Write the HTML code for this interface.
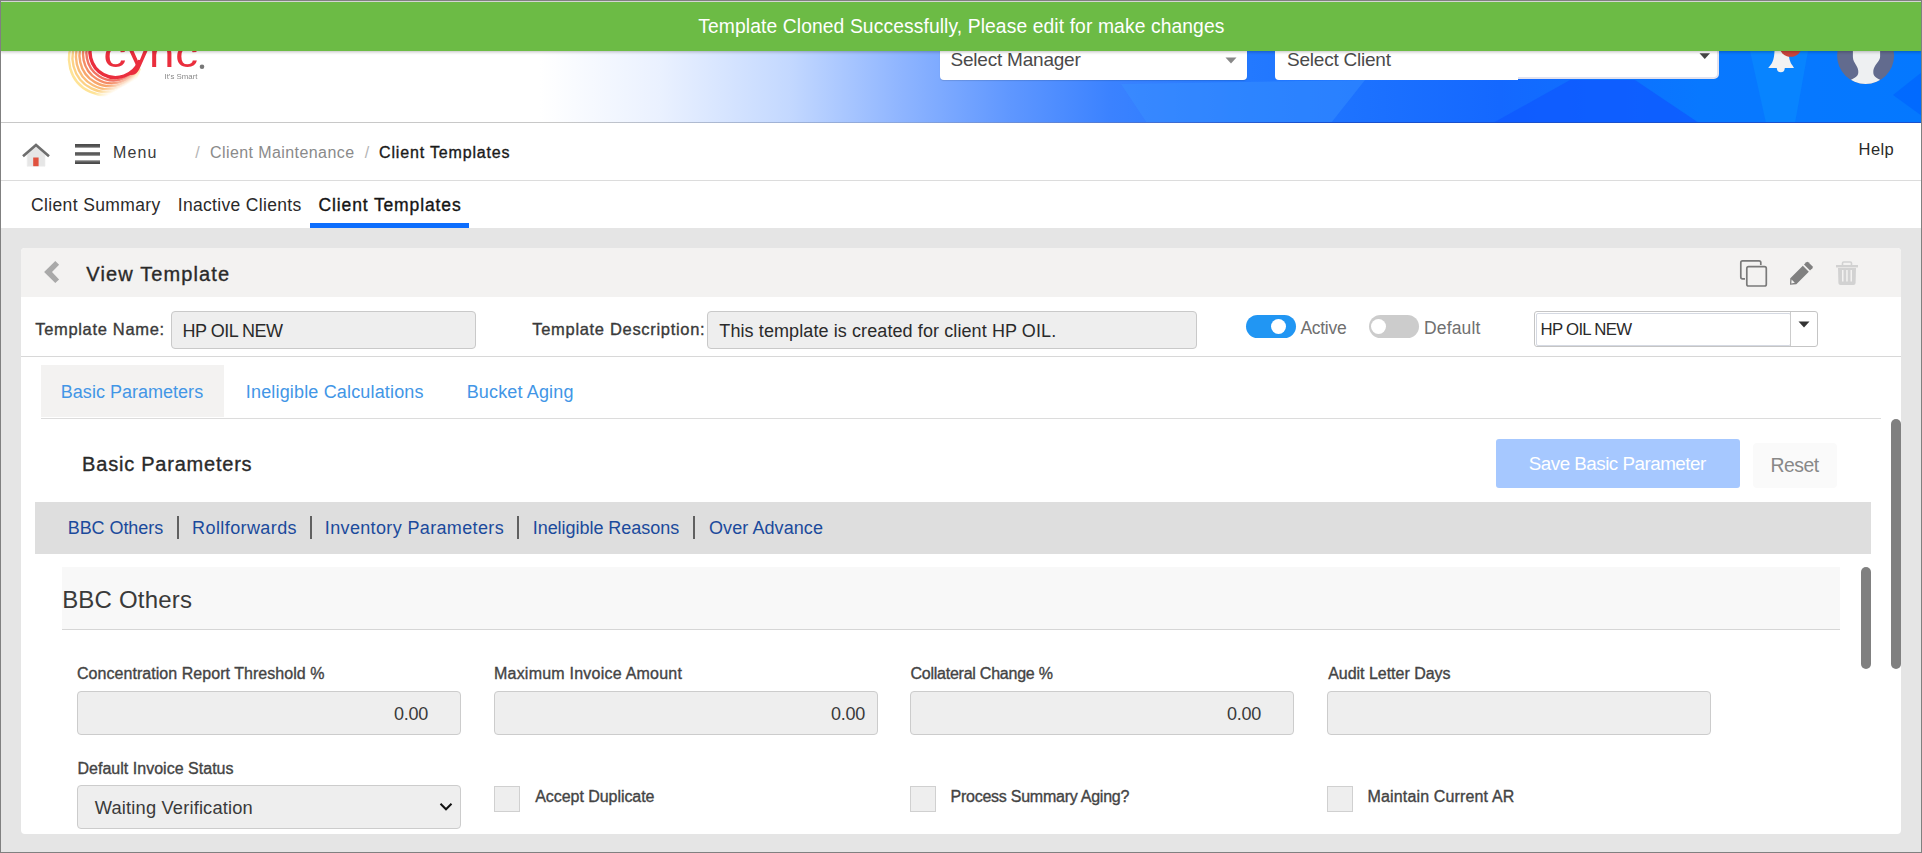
<!DOCTYPE html>
<html lang="en">
<head>
<meta charset="utf-8">
<title>Client Templates - View Template</title>
<style>
html,body{margin:0;padding:0;}
body{width:1922px;height:853px;overflow:hidden;background:#e5e5e5;font-family:"Liberation Sans",sans-serif;}
#root{position:relative;width:1922px;height:853px;overflow:hidden;background:#e5e5e5;}
#root div,#root svg,#root span{position:absolute;box-sizing:border-box;}
header,nav,main,section{display:block;position:static;margin:0;padding:0;}
.t{white-space:nowrap;line-height:1;font-family:"Liberation Sans",sans-serif;}
.inp{background:#eeeeee;border:1px solid #cccccc;border-radius:4px;}
.chk{background:#eeeeee;border:1px solid #d0d0d0;width:25.500px;height:26px;}
.sep{width:2px;height:23.500px;top:515.500px;background:#606060;}

</style>
</head>
<body>
<div id="root">
<header>
<!-- header -->
<div id="hdr" style="left:0;top:0;width:1922px;height:123px;background:linear-gradient(90deg,#ffffff 0,#ffffff 540px,#eaf1ff 660px,#c3d8ff 790px,#8fb5ff 900px,#5f97ff 1010px,#3b82ff 1110px,#2379ff 1250px,#1468ff 1500px,#0878ff 1700px,#0478ff 1922px);"></div>
<svg id="hdrpoly" style="left:0;top:0" width="1922" height="123" viewBox="0 0 1922 123">
  <polygon points="1121,84 1365,80 1331,123 1147,123" fill="#3a92ff" opacity="0.450"/>
  <polygon points="1570,80 1635,80 1699,123 1493,123" fill="#0f58ff" opacity="0.750"/>
  <polygon points="1750,51 1808,51 1795,123 1766,123" fill="#0a8cff" opacity="0.600"/>
  <polygon points="1922,72 1893,95 1922,116" fill="#0060ff" opacity="0.600"/>
</svg>
<div id="hdrline" style="left:0;top:122px;width:1922px;height:1px;background:linear-gradient(90deg,#c8c8c8 0,#c8c8c8 560px,#8aa6dd 900px,#1a50cc 1300px,#1a50cc 1922px);"></div>

<!-- logo -->
<svg id="logo" style="left:0;top:0" width="260" height="122" viewBox="0 0 260 122">
  <defs>
    <linearGradient id="lgfade" gradientUnits="userSpaceOnUse" x1="64" y1="110.800" x2="68.500" y2="118.600">
      <stop offset="0" stop-color="#ffffff" stop-opacity="1"/>
      <stop offset="1" stop-color="#ffffff" stop-opacity="0"/>
    </linearGradient>
    <mask id="lgmask" maskUnits="userSpaceOnUse" x="0" y="0" width="260" height="122">
      <rect x="0" y="0" width="260" height="122" fill="#000000"/>
      <rect x="0" y="0" width="260" height="122" fill="url(#lgfade)"/>
    </mask>
    <filter id="lgblur" x="-10%" y="-10%" width="120%" height="120%"><feGaussianBlur stdDeviation="0.550"/></filter>
  </defs>
  <g filter="url(#lgblur)">
  <g fill="none" mask="url(#lgmask)" opacity="0.820">
    <path d="M136.94 67.47 A27.25 27.25 0 1 1 91.43 37.54" stroke="#ee5540" stroke-width="2.400"/>
    <path d="M137.53 68.10 A29.00 29.00 0 1 1 88.24 37.70" stroke="#f27545" stroke-width="2.400"/>
    <path d="M138.12 68.50 A30.75 30.75 0 1 1 85.06 37.86" stroke="#f6934e" stroke-width="2.400"/>
    <path d="M138.70 68.67 A32.50 32.50 0 1 1 81.88 38.03" stroke="#f9ae5c" stroke-width="2.400"/>
    <path d="M139.26 68.61 A34.25 34.25 0 1 1 78.69 38.19" stroke="#fcc86c" stroke-width="2.400"/>
    <path d="M139.77 68.32 A36.00 36.00 0 1 1 75.51 38.35" stroke="#fedd80" stroke-width="2.400"/>
  </g>
  <path d="M139.14 61.55 A25.50 25.50 0 1 1 94.61 37.37" fill="none" stroke="#ea2e3e" stroke-width="3.400" stroke-linecap="round"/>
  <text transform="scale(1.20 1)" x="86.17 105.83 124.17 146.08" y="67.300" font-family="Liberation Sans, sans-serif" font-size="38" fill="#ea2e3e">cync</text>
  <circle cx="202" cy="66.700" r="2.300" fill="#777777"/>
  <text x="164.500" y="79" font-family="Liberation Sans, sans-serif" font-size="7.200" fill="#8a8a8a" textLength="33" lengthAdjust="spacingAndGlyphs">It's Smart</text>
  </g>
</svg>

<!-- header selects -->
<div id="selmgr" style="left:940px;top:30px;width:307px;height:50px;background:#ffffff;border-radius:4px;box-shadow:0 1px 1px rgba(0,0,0,.120);"></div>
<svg style="left:1225px;top:57px" width="12" height="7" viewBox="0 0 12 7"><polygon points="0.5,0.5 11.5,0.5 6,6.5" fill="#888888"/></svg>
<span id="t_selmgr" class="t" style="left:950.46px;top:50.01px;font-size:19px;color:#4a4a4a;letter-spacing:-0.210px;">Select Manager</span>
<div id="selcli" style="left:1275px;top:30px;width:444px;height:49px;background:#ffffff;border-radius:5px;border:2px solid #e2e2ee;"></div>
<div style="left:1275px;top:30px;width:243px;height:50px;background:#ffffff;border-radius:4px 0 0 4px;"></div>
<svg style="left:1699px;top:53px" width="12" height="7" viewBox="0 0 12 7"><polygon points="0.500,0.200 11,0.200 5.750,5.900" fill="#444444"/></svg>
<span id="t_selcli" class="t" style="left:1287.08px;top:50.01px;font-size:19px;color:#4a4a4a;letter-spacing:-0.236px;">Select Client</span>

<!-- bell -->
<svg id="bell" style="left:1760px;top:30px" width="50" height="50" viewBox="1760 30 50 50">
  <path d="M1768.200 68 L1770.200 65.600 C1773 62.300 1774.200 58 1774.500 51 L1774.500 36 L1788.500 36 L1788.500 51 C1788.800 58 1790 62.300 1792.500 65.600 L1794 68 Z" fill="#f2f2f2"/>
  <circle cx="1780.800" cy="68.300" r="3.900" fill="#f2f2f2"/>
  <circle cx="1790.600" cy="45.300" r="11.500" fill="#c9443c"/>
</svg>
<!-- avatar -->
<svg id="avatar" style="left:1836px;top:26px" width="60" height="60" viewBox="1836 26 60 60">
  <defs><clipPath id="avc"><circle cx="1865.600" cy="55.500" r="28.500"/></clipPath></defs>
  <circle cx="1865.600" cy="55.500" r="28.500" fill="#626b8e"/>
  <g clip-path="url(#avc)">
    <path d="M1852.900 40 L1852.900 57 C1852.900 60 1854.500 62.500 1856 65 C1857.800 68 1858.300 69.500 1858.300 72 C1858.300 75.500 1856.500 77 1852.500 79 L1846 82.500 L1846 90 L1885 90 L1885 82.500 L1878.500 79 C1874.800 77 1873.300 75.500 1873.300 72 C1873.300 69.500 1873.800 68 1875.600 65 C1877.500 62 1880.100 60 1880.100 57 L1880.100 40 Z" fill="#eef0f2"/>
  </g>
</svg>

</header>

<!-- green banner (on top of header) -->
<div id="banner" style="left:0;top:0;width:1922px;height:51px;background:#6cbb45;box-shadow:0 1px 3px rgba(0,0,0,.25);"></div>
<span id="t_banner" class="t" style="left:698.26px;top:17.02px;font-size:19.3px;color:#ffffff;letter-spacing:0.099px;">Template Cloned Successfully, Please edit for make changes</span>

<nav>
<!-- nav bar -->
<div id="nav" style="left:0;top:123px;width:1922px;height:57px;background:#ffffff;"></div>
<div style="left:0;top:180px;width:1922px;height:1px;background:#dcdcdc;"></div>
<div id="tabs" style="left:0;top:181px;width:1922px;height:47px;background:#ffffff;"></div>
<div id="tabul" style="left:310px;top:223px;width:159px;height:5px;background:#0d6efd;"></div>

<!-- home icon -->
<svg id="home" style="left:20px;top:141px" width="32" height="28" viewBox="0 0 32 28">
  <path d="M7.200 13.500 L7.200 25.200 L25 25.200 L25 13.500 L16 5.500 Z" fill="#e6e6e6" stroke="#ececec" stroke-width="0.700"/>
  <rect x="13.200" y="16.500" width="5.400" height="8.700" fill="#e0523f"/>
  <path d="M3 15.300 L16 4 L29 15.300" fill="none" stroke="#6e6e6e" stroke-width="2.600" stroke-linejoin="miter"/>
</svg>
<!-- hamburger -->
<div style="left:75px;top:144px;width:25px;height:4px;background:linear-gradient(180deg,#4a4a4a 0,#555555 60%,#bdbdbd 100%);"></div>
<div style="left:75px;top:152px;width:25px;height:4px;background:linear-gradient(180deg,#8a8a8a 0,#555555 40%,#666666 75%,#c4c4c4 100%);"></div>
<div style="left:75px;top:160px;width:25px;height:4px;background:linear-gradient(180deg,#bdbdbd 0,#5a5a5a 45%,#444444 100%);"></div>

<span id="t_menu" class="t" style="left:113.00px;top:145.01px;font-size:16px;color:#3a3a3a;letter-spacing:1.131px;">Menu</span>
<span id="t_s1" class="t" style="left:195.34px;top:145.01px;font-size:16px;color:#b4b4b4;letter-spacing:0.000px;">/</span>
<span id="t_cm" class="t" style="left:209.96px;top:145.01px;font-size:16px;color:#8a8a8a;letter-spacing:0.420px;">Client Maintenance</span>
<span id="t_s2" class="t" style="left:364.80px;top:145.01px;font-size:16px;color:#b4b4b4;letter-spacing:0.000px;">/</span>
<span id="t_ct" class="t" style="left:379.00px;top:145.01px;font-size:16px;color:#1a1a1a;letter-spacing:0.841px;-webkit-text-stroke:0.35px #1a1a1a;">Client Templates</span>
<span id="t_help" class="t" style="left:1858.62px;top:141.01px;font-size:16.5px;color:#2a2a2a;letter-spacing:0.404px;">Help</span>
<span id="t_tab1" class="t" style="left:31.00px;top:197.02px;font-size:17.5px;color:#2a2a2a;letter-spacing:0.366px;">Client Summary</span>
<span id="t_tab2" class="t" style="left:177.74px;top:197.02px;font-size:17.5px;color:#2a2a2a;letter-spacing:0.320px;">Inactive Clients</span>
<span id="t_tab3" class="t" style="left:318.50px;top:197.02px;font-size:17.5px;color:#151515;letter-spacing:0.872px;-webkit-text-stroke:0.35px #151515;">Client Templates</span>
</nav>

<main>
<!-- card -->
<div id="card" style="left:21px;top:248px;width:1880px;height:586px;background:#ffffff;border-radius:4px;"></div>
<div id="cardhdr" style="left:21px;top:248px;width:1880px;height:49px;background:#f3f2f1;border-radius:4px 4px 0 0;"></div>
<svg id="back" style="left:40px;top:256px" width="24" height="32" viewBox="40 256 24 32">
  <polygon points="44.100,272 55.300,261.050 59.100,264.800 52,272 59.100,279.400 55.300,282.900" fill="#a9a9a9"/>
</svg>
<span id="t_view" class="t" style="left:86.30px;top:264.00px;font-size:20px;color:#2a2a2a;letter-spacing:1.129px;-webkit-text-stroke:0.35px #2a2a2a;">View Template</span>
<!-- clone icon -->
<svg id="clone" style="left:1738px;top:258px" width="32" height="32" viewBox="0 0 32 32">
  <path d="M7 20.800 L4.600 20.800 Q2.800 20.800 2.800 19 L2.800 4.600 Q2.800 2.800 4.600 2.800 L21 2.800 Q22.800 2.800 22.800 4.600 L22.800 7" fill="none" stroke="#7a7a7a" stroke-width="1.700"/>
  <rect x="8.800" y="8.700" width="19.500" height="19.300" rx="1.800" fill="none" stroke="#7a7a7a" stroke-width="1.700"/>
</svg>
<!-- pencil icon -->
<svg id="pencil" style="left:1788px;top:260px" width="28" height="28" viewBox="0 0 28 28">
  <path d="M2 24.800 L2.300 18.200 L14.800 5.700 L20.800 11.700 L8.300 24.200 Z" fill="#808080"/>
  <path d="M16 4.500 L18.300 2.200 Q19.300 1.300 20.300 2.200 L24.400 6.300 Q25.300 7.300 24.400 8.300 L22 10.600 Z" fill="#808080"/>
  <path d="M3.600 19.600 L6.800 22.800 L3.300 23.400 Z" fill="#f3f2f1"/>
</svg>
<!-- trash icon -->
<svg id="trash" style="left:1834px;top:260px" width="26" height="28" viewBox="0 0 26 28">
  <path d="M8.500 5 L8.500 3.200 Q8.500 2 9.700 2 L16.300 2 Q17.500 2 17.500 3.200 L17.500 5" fill="none" stroke="#d2d2d2" stroke-width="1.600"/>
  <rect x="2" y="5" width="22" height="2.400" fill="#d2d2d2"/>
  <path d="M4 8 L22 8 L21.600 23 Q21.500 25 19.500 25 L6.500 25 Q4.500 25 4.400 23 Z" fill="#d2d2d2"/>
  <rect x="8" y="10" width="1.500" height="11.500" fill="#f3f2f1"/>
  <rect x="12.200" y="10" width="1.500" height="11.500" fill="#f3f2f1"/>
  <rect x="16.500" y="10" width="1.500" height="11.500" fill="#f3f2f1"/>
</svg>

<!-- template name row -->
<div class="inp" style="left:171px;top:311px;width:305px;height:38px;border-color:#c9c9c9;"></div>
<div class="inp" style="left:707px;top:311px;width:490px;height:38px;border-color:#c9c9c9;"></div>
<div style="left:21px;top:356px;width:1880px;height:1px;background:#d8d8d8;"></div>
<span id="t_tn" class="t" style="left:35.26px;top:321.01px;font-size:16.5px;color:#3a3a3a;letter-spacing:0.671px;-webkit-text-stroke:0.35px #3a3a3a;">Template Name:</span>
<span id="t_tnv" class="t" style="left:182.50px;top:322.01px;font-size:18px;color:#2a2a2a;letter-spacing:-0.492px;">HP OIL NEW</span>
<span id="t_td" class="t" style="left:532.30px;top:321.01px;font-size:16.5px;color:#3a3a3a;letter-spacing:0.683px;-webkit-text-stroke:0.35px #3a3a3a;">Template Description:</span>
<span id="t_tdv" class="t" style="left:719.30px;top:322.01px;font-size:18px;color:#2a2a2a;letter-spacing:0.097px;">This template is created for client HP OIL.</span>
<!-- toggles -->
<div style="left:1246px;top:315px;width:50px;height:23px;border-radius:11.500px;background:#2196f3;"></div>
<div style="left:1270.900px;top:318.500px;width:15.500px;height:15.500px;border-radius:8px;background:#ffffff;"></div>
<div style="left:1369px;top:315px;width:50px;height:23px;border-radius:11.500px;background:#cccccc;"></div>
<div style="left:1370.500px;top:318.500px;width:15.500px;height:15.500px;border-radius:8px;background:#ffffff;"></div>
<span id="t_active" class="t" style="left:1300.42px;top:320.02px;font-size:17.5px;color:#707070;letter-spacing:-0.272px;">Active</span>
<span id="t_default" class="t" style="left:1424.04px;top:320.02px;font-size:17.5px;color:#707070;letter-spacing:0.150px;">Default</span>
<!-- combo -->
<div style="left:1534px;top:311px;width:284px;height:36px;background:#ffffff;border:1px solid #c5c5c5;border-radius:3px;"></div>
<div style="left:1536px;top:313px;width:255px;height:33px;border:1px solid #d5d9e2;border-radius:2px;"></div>
<div style="left:1790px;top:312px;width:1px;height:34px;background:#cccccc;"></div>
<svg style="left:1798px;top:321px" width="12" height="7" viewBox="0 0 12 7"><polygon points="0.500,0.500 11.500,0.500 6,6.500" fill="#333333"/></svg>

<span id="t_combo" class="t" style="left:1540.58px;top:322.00px;font-size:16.8px;color:#2a2a2a;letter-spacing:-0.722px;">HP OIL NEW</span>

<!-- sub tabs -->
<div style="left:41px;top:365px;width:183px;height:52px;background:#f3f2f1;"></div>
<div style="left:41px;top:418px;width:1840px;height:1px;background:#dcdcdc;"></div>

<span id="t_st1" class="t" style="left:60.82px;top:383.01px;font-size:18px;color:#4296e6;letter-spacing:0.018px;">Basic Parameters</span>
<span id="t_st2" class="t" style="left:245.82px;top:383.01px;font-size:18px;color:#4296e6;letter-spacing:0.162px;">Ineligible Calculations</span>
<span id="t_st3" class="t" style="left:466.70px;top:383.01px;font-size:18px;color:#4296e6;letter-spacing:0.150px;">Bucket Aging</span>

<!-- buttons -->
<div style="left:1496px;top:439px;width:244px;height:49px;background:#a6c8ff;border-radius:3px;"></div>
<div style="left:1753px;top:443px;width:84px;height:45px;background:#fafafa;border-radius:4px;"></div>

<span id="t_bp" class="t" style="left:82.12px;top:454.00px;font-size:20px;color:#2a2a2a;letter-spacing:0.778px;-webkit-text-stroke:0.35px #2a2a2a;">Basic Parameters</span>
<span id="t_save" class="t" style="left:1528.78px;top:455.00px;font-size:18.8px;color:#ffffff;letter-spacing:-0.496px;">Save Basic Parameter</span>
<span id="t_reset" class="t" style="left:1770.62px;top:456.01px;font-size:19.4px;color:#888888;letter-spacing:-0.531px;">Reset</span>

<!-- link bar -->
<div style="left:35px;top:502px;width:1836px;height:52px;background:#dedede;"></div>
<div class="sep" style="left:177px;"></div>
<div class="sep" style="left:310px;"></div>
<div class="sep" style="left:517px;"></div>
<div class="sep" style="left:693.300px;"></div>

<span id="t_l1" class="t" style="left:67.70px;top:519.01px;font-size:18px;color:#1b4a9c;letter-spacing:-0.062px;">BBC Others</span>
<span id="t_l2" class="t" style="left:192.12px;top:519.01px;font-size:18px;color:#1b4a9c;letter-spacing:0.403px;">Rollforwards</span>
<span id="t_l3" class="t" style="left:324.82px;top:519.01px;font-size:18px;color:#1b4a9c;letter-spacing:0.355px;">Inventory Parameters</span>
<span id="t_l4" class="t" style="left:532.70px;top:519.01px;font-size:18px;color:#1b4a9c;letter-spacing:-0.036px;">Ineligible Reasons</span>
<span id="t_l5" class="t" style="left:709.04px;top:519.01px;font-size:18px;color:#1b4a9c;letter-spacing:0.074px;">Over Advance</span>

<section>
<!-- section header -->
<div style="left:62px;top:567px;width:1778px;height:62px;background:#f8f8f8;"></div>
<div style="left:62px;top:629px;width:1778px;height:1px;background:#d6d6d6;"></div>

<span id="t_bbc" class="t" style="left:62.16px;top:588.01px;font-size:24px;color:#3a3a3a;letter-spacing:0.189px;">BBC Others</span>

<!-- scrollbars -->
<div style="left:1891px;top:419px;width:10px;height:250px;background:#808080;border-radius:5px;"></div>
<div style="left:1861px;top:567px;width:10px;height:102px;background:#808080;border-radius:5px;"></div>

<!-- form inputs -->
<div class="inp" style="left:77px;top:691px;width:384px;height:44px;"></div>
<div class="inp" style="left:494px;top:691px;width:384px;height:44px;"></div>
<div class="inp" style="left:910px;top:691px;width:384px;height:44px;"></div>
<div class="inp" style="left:1327px;top:691px;width:384px;height:44px;"></div>
<div class="inp" style="left:77px;top:785px;width:384px;height:44px;"></div>
<svg style="left:439px;top:802px" width="14" height="10" viewBox="0 0 14 10"><path d="M1.500 1.800 L7 7.300 L12.500 1.800" fill="none" stroke="#111111" stroke-width="2"/></svg>
<div class="chk" style="left:494px;top:786px;"></div>
<div class="chk" style="left:910px;top:786px;"></div>
<div class="chk" style="left:1327px;top:786px;"></div>

<span id="t_f1" class="t" style="left:77.00px;top:666.01px;font-size:16px;color:#444444;letter-spacing:0.047px;-webkit-text-stroke:0.35px #444444;">Concentration Report Threshold %</span>
<span id="t_f2" class="t" style="left:493.96px;top:666.01px;font-size:16px;color:#444444;letter-spacing:0.228px;-webkit-text-stroke:0.35px #444444;">Maximum Invoice Amount</span>
<span id="t_f3" class="t" style="left:910.42px;top:666.01px;font-size:16px;color:#444444;letter-spacing:-0.235px;-webkit-text-stroke:0.35px #444444;">Collateral Change %</span>
<span id="t_f4" class="t" style="left:1328.14px;top:666.01px;font-size:16px;color:#444444;letter-spacing:-0.020px;-webkit-text-stroke:0.35px #444444;">Audit Letter Days</span>
<span id="t_v1" class="t" style="left:394.00px;top:705.01px;font-size:18px;color:#3a3a3a;letter-spacing:-0.275px;">0.00</span>
<span id="t_v2" class="t" style="left:830.96px;top:705.01px;font-size:18px;color:#3a3a3a;letter-spacing:-0.275px;">0.00</span>
<span id="t_v3" class="t" style="left:1227.00px;top:705.01px;font-size:18px;color:#3a3a3a;letter-spacing:-0.275px;">0.00</span>
<span id="t_f5" class="t" style="left:77.46px;top:761.01px;font-size:16px;color:#444444;letter-spacing:0.021px;-webkit-text-stroke:0.35px #444444;">Default Invoice Status</span>
<span id="t_wv" class="t" style="left:94.80px;top:799.01px;font-size:18.3px;color:#3a3a3a;letter-spacing:0.165px;">Waiting Verification</span>
<span id="t_c1" class="t" style="left:535.22px;top:789.01px;font-size:16px;color:#444444;letter-spacing:-0.054px;-webkit-text-stroke:0.35px #444444;">Accept Duplicate</span>
<span id="t_c2" class="t" style="left:950.50px;top:789.01px;font-size:16px;color:#444444;letter-spacing:-0.249px;-webkit-text-stroke:0.35px #444444;">Process Summary Aging?</span>
<span id="t_c3" class="t" style="left:1367.50px;top:789.01px;font-size:16px;color:#444444;letter-spacing:0.153px;-webkit-text-stroke:0.35px #444444;">Maintain Current AR</span>
</section>
</main>

<!-- outer frame -->
<div style="left:0;top:1px;width:1922px;height:1px;background:#d4d4d4;"></div>
<div id="frame" style="left:0;top:0;width:1922px;height:853px;border:1px solid #808080;"></div>


</div>
</body>
</html>
